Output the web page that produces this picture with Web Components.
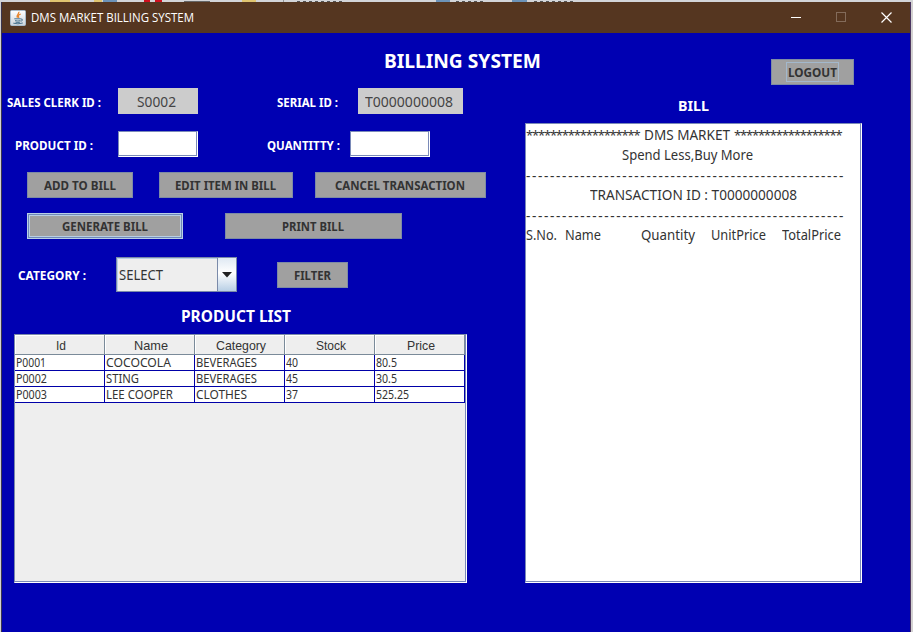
<!DOCTYPE html>
<html lang="en">
<head>
<meta charset="utf-8">
<title>DMS MARKET BILLING SYSTEM</title>
<style>
html,body{margin:0;width:913px;height:632px;overflow:hidden;background:#d3d1d1}
body{font-family:"Noto Sans",sans-serif;color:#333}
</style>
</head>
<body>
<billing-app></billing-app>
<script>
const root=(el,html)=>{const r=el.attachShadow({mode:'open'});r.innerHTML=html;return r;};

/* Text set to a given width: attributes w (px), s (font size), spread (use letter spacing). */
customElements.define('fit-text',class extends HTMLElement{
  connectedCallback(){
    if(this.shadowRoot)return;
    const w=+this.getAttribute('w'),s=this.getAttribute('s')||13;
    const r=root(this,`<style>:host{display:block;flex:none;width:${w}px;font-size:${s}px;line-height:20px;height:20px;white-space:pre}
      span{display:inline-block;transform-origin:0 50%}</style><span><slot></slot></span>`);
    const sp=r.querySelector('span'),n=sp.getBoundingClientRect().width;
    if(!n)return;
    if(this.hasAttribute('spread'))sp.style.letterSpacing=((w-n)/this.textContent.length)+'px';
    else sp.style.transform=`scaleX(${w/n})`;
  }
});

customElements.define('title-bar',class extends HTMLElement{
  connectedCallback(){root(this,`<style>
    :host{display:flex;height:31px;background:#553620;align-items:center;box-sizing:border-box;padding-left:8px;color:#fff;font-family:"Open Sans",sans-serif}
    svg{display:block;flex:none} fit-text{margin-left:5px}
    .c{margin-left:auto;display:flex;align-items:center;gap:34px;margin-right:18px}
  </style>
  <svg width="16" height="16" viewBox="0 0 16 16"><defs><linearGradient id="g" x2="0" y2="1"><stop stop-color="#fff"/><stop offset="1" stop-color="#cbd3da"/></linearGradient></defs>
    <rect x=".5" y=".5" width="15" height="15" rx="1" fill="url(#g)" stroke="#a9bccb"/>
    <path d="M8.8 1.8C9.6 4 5.8 4.500 7.400 7.800M10.800 4C8.300 4.800 7.800 5.800 8.900 7.900" fill="none" stroke="#e8862e" stroke-width="1.300"/>
    <path d="M4.300 8.800h6.500M5 10.600q3 .9 5.500 0M5.500 12.200q2.500.6 4.500 0M10.800 9q2-.2 1.500 1.200-.3.900-1.600 1.200M3.300 13.200q4.500 1.300 9.500-.2" fill="none" stroke="#4b7590" stroke-width="1"/></svg>
  <fit-text w="163" s="12.500"><slot></slot></fit-text>
  <div class="c">
    <svg width="11" height="11"><path d="M0 5.500h10" stroke="#fff"/></svg>
    <svg width="11" height="11"><rect x=".5" y=".5" width="9" height="9" fill="none" stroke="#836b5a"/></svg>
    <svg width="11" height="11"><path d="M.5.500l10 10M10.500.500l-10 10" stroke="#fff" stroke-width="1.200"/></svg>
  </div>`)}
});

customElements.define('field-label',class extends HTMLElement{
  connectedCallback(){root(this,`<style>:host{display:block;color:#fff;font-weight:700}</style>
    <fit-text w="${this.getAttribute('w')}" s="${this.getAttribute('s')||12.5}"><slot></slot></fit-text>`)}
});

customElements.define('swing-button',class extends HTMLElement{
  connectedCallback(){root(this,`<style>
    :host{display:flex;flex:none;box-sizing:border-box;height:26px;align-items:center;justify-content:center;background:#a0a0a0;border:1px solid #7d8ba5;color:#333;font-weight:700}
    :host([active]){border-color:#b8cfe5;box-shadow:inset 0 0 0 1px #7088b8,inset 0 0 0 2px #b8cfe5}
    .f{display:block;padding-top:2px;margin-right:1px}
    :host([focused]) .f{outline:1px solid #a3b8cc;outline-offset:1px;height:16px;padding:0;margin:0}
    :host([focused]) fit-text{margin-top:-1px}
  </style><div class="f"><fit-text w="${this.getAttribute('w')}" s="12.500"><slot></slot></fit-text></div>`)}
});

customElements.define('text-box',class extends HTMLElement{
  connectedCallback(){root(this,`<style>
    :host{display:flex;flex:none;box-sizing:border-box;height:26px;align-items:center;justify-content:center;background:#ccc;color:#444}
    :host([editable]){background:#fff;border:1px solid #7a8ab8;border-right-color:#fff;border-bottom-color:#fff;box-shadow:inset -1px -1px #7a8ab8}
  </style>${this.textContent?`<fit-text w="${this.getAttribute('w')}" s="14"><slot></slot></fit-text>`:''}`)}
});

customElements.define('combo-box',class extends HTMLElement{
  connectedCallback(){root(this,`<style>
    :host{display:flex;flex:none;box-sizing:border-box;width:121px;height:35px;border:1px solid #7a8aa9;background:#eee;box-shadow:inset 1px 1px #b8cfe5;align-items:center}
    fit-text{margin-left:2px}
    i{margin-left:auto;width:18px;height:33px;border-left:1px solid #7a8aa9;background:linear-gradient(#dfe9f3,#fff 45%,#b8cfe5);display:flex;align-items:center;justify-content:center}
  </style><fit-text w="44" s="13.500"><slot></slot></fit-text><i><svg width="10" height="6"><path d="M0 0h10L5 5.500z" fill="#222"/></svg></i>`)}
});

customElements.define('product-table',class extends HTMLElement{
  connectedCallback(){
    const heads=[['Id',10],['Name',34],['Category',50],['Stock',30],['Price',28]];
    const rows=[[['P0001',30],['COCOCOLA',65],['BEVERAGES',61],['40',12],['80.5',21]],
      [['P0002',31],['STING',33],['BEVERAGES',61],['45',12],['30.5',21]],
      [['P0003',31],['LEE COOPER',67],['CLOTHES',51],['37',12],['525.25',33]]];
    root(this,`<style>
    :host{display:block;box-sizing:border-box;width:453px;height:249px;background:#eee;border:1px solid #7a8aa9;border-right-color:#fff;border-bottom-color:#fff;box-shadow:inset -1px -1px #7a8ab8}
    .h,.r{display:grid;grid-template-columns:repeat(5,90px);width:450px}
    .h div{height:20px;box-sizing:border-box;border-right:1px solid #7a8a99;border-bottom:1px solid #7a8a99;box-shadow:inset 1px 1px #fff;display:flex;justify-content:center;padding:1px 0 0 3px;font-family:"Liberation Sans",sans-serif}
    .r div{height:16px;box-sizing:border-box;background:#fff;border-right:1px solid #0000a8;border-bottom:1px solid #0000a8;padding-left:1px}
    .r fit-text{height:15px;line-height:16px}
    </style><div class="h">${heads.map(([t,w])=>`<div><fit-text w="${w}" s="13">${t}</fit-text></div>`).join('')}</div>
    ${rows.map(r=>`<div class="r">${r.map(([t,w])=>`<div><fit-text w="${w}" s="12">${t}</fit-text></div>`).join('')}</div>`).join('')}`)}
});

customElements.define('bill-paper',class extends HTMLElement{
  connectedCallback(){
    const dash='-'.repeat(53);
    root(this,`<style>
    :host{display:block;box-sizing:border-box;width:337px;height:460px;background:#fff;border:1px solid #7a8ab8;border-right-color:#fff;border-bottom-color:#fff;box-shadow:inset -1px -1px #7a8ab8;padding-top:1px}
    .l{display:flex;height:20px}
    .d{padding-top:1px;height:19px}
    </style>
    <div class="l"><fit-text w="113.500" s="13" spread>${'*'.repeat(19)}</fit-text><fit-text w="86" s="14" style="margin-left:4.500px">DMS MARKET</fit-text><fit-text w="107.500" s="13" spread style="margin-left:4px">${'*'.repeat(18)}</fit-text></div>
    <div class="l"><fit-text w="131" s="14" style="margin-left:96px">Spend Less,Buy More</fit-text></div>
    <div class="l d"><fit-text w="319" s="13.500" spread>${dash}</fit-text></div>
    <div class="l"><fit-text w="207" s="14" style="margin-left:64px">TRANSACTION ID : T0000000008</fit-text></div>
    <div class="l d"><fit-text w="319" s="13.500" spread>${dash}</fit-text></div>
    <div class="l"><fit-text w="31" s="14">S.No.</fit-text><fit-text w="36" s="14" style="margin-left:8px">Name</fit-text><fit-text w="54" s="14" style="margin-left:40px">Quantity</fit-text><fit-text w="55" s="14" style="margin-left:16px">UnitPrice</fit-text><fit-text w="59" s="14" style="margin-left:16px">TotalPrice</fit-text></div>`)}
});

customElements.define('billing-app',class extends HTMLElement{
  connectedCallback(){root(this,`<style>
    :host{display:flex;flex-direction:column;width:913px;height:632px}
    .top{display:block;height:2px;flex:none}
    .win{flex:1;display:flex;flex-direction:column;margin-right:2px;margin-left:1px;border-left:1px solid #3a3550;border-right:1px solid #4a3560;background:#0000b2}
    .head{height:55px;display:flex;color:#fff;font-weight:700}
    .cols{display:flex}
    .left{width:523px;flex:none}
    .row{display:flex;align-items:center;height:26px}
    </style>
    <svg class="top" width="913" height="2"><rect width="913" height="2" fill="#d3d5d8"/>
      <path d="M50 1h20M94 1h8M242 1h14" stroke="#e0c570" stroke-width="2"/><path d="M103 1h14M436 1h14M512 1h15" stroke="#6c93b8" stroke-width="2"/>
      <path d="M144 1h6M155 1h7" stroke="#d01020" stroke-width="2"/><path d="M184 1.500h26" stroke="#666"/>
      <path d="M283 1h1M297 1.500h46M456 1.500h28M534 1.500h40" stroke="#555" stroke-dasharray="3 3"/></svg>
    <div class="win">
      <title-bar>DMS MARKET BILLING SYSTEM</title-bar>
      <div class="head"><fit-text w="157" s="19.500" style="margin:18px 0 0 382px">BILLING SYSTEM</fit-text>
        <swing-button focused w="49" style="width:83px;margin:26px 0 0 230px">LOGOUT</swing-button></div>
      <div class="cols">
        <div class="left">
          <div class="row"><field-label w="94" style="margin:3px 0 0 5px">SALES CLERK ID :</field-label><text-box w="39" style="width:80px;margin-left:17px;padding-top:2px;padding-right:3px">S0002</text-box>
            <field-label w="61" style="margin:3px 0 0 79px">SERIAL ID :</field-label><text-box w="88" style="width:105px;margin-left:20px;padding-top:2px;padding-right:3px">T0000000008</text-box></div>
          <div class="row" style="margin-top:17px"><field-label w="78" style="margin:3px 0 0 13px">PRODUCT ID :</field-label><text-box editable style="width:80px;margin-left:25px"></text-box>
            <field-label w="73" style="margin:3px 0 0 69px">QUANTITTY :</field-label><text-box editable style="width:80px;margin-left:10px"></text-box></div>
          <div class="row" style="margin-top:15px"><swing-button w="72" style="width:106px;margin-left:25px">ADD TO BILL</swing-button><swing-button w="101" style="width:134px;margin-left:26px">EDIT ITEM IN BILL</swing-button><swing-button w="130" style="width:171px;margin-left:22px">CANCEL TRANSACTION</swing-button></div>
          <div class="row" style="margin-top:15px"><swing-button active w="86" style="width:156px;margin-left:25px">GENERATE BILL</swing-button><swing-button w="62" style="width:177px;margin-left:42px">PRINT BILL</swing-button></div>
          <div class="row" style="margin-top:18px;height:35px"><field-label w="68" style="margin:3px 0 0 16px">CATEGORY :</field-label><combo-box style="margin-left:30px">SELECT</combo-box><swing-button w="37" style="width:71px;margin-left:40px;margin-top:1px">FILTER</swing-button></div>
          <field-label w="110" s="15.500" style="margin:14px 0 8px 179px">PRODUCT LIST</field-label>
          <product-table style="margin-left:12px"></product-table>
        </div>
        <div class="right">
          <field-label w="31" s="15" style="margin:7px 0 8px 153px">BILL</field-label>
          <bill-paper></bill-paper>
        </div>
      </div>
    </div>`)}
});
</script>
</body>
</html>
